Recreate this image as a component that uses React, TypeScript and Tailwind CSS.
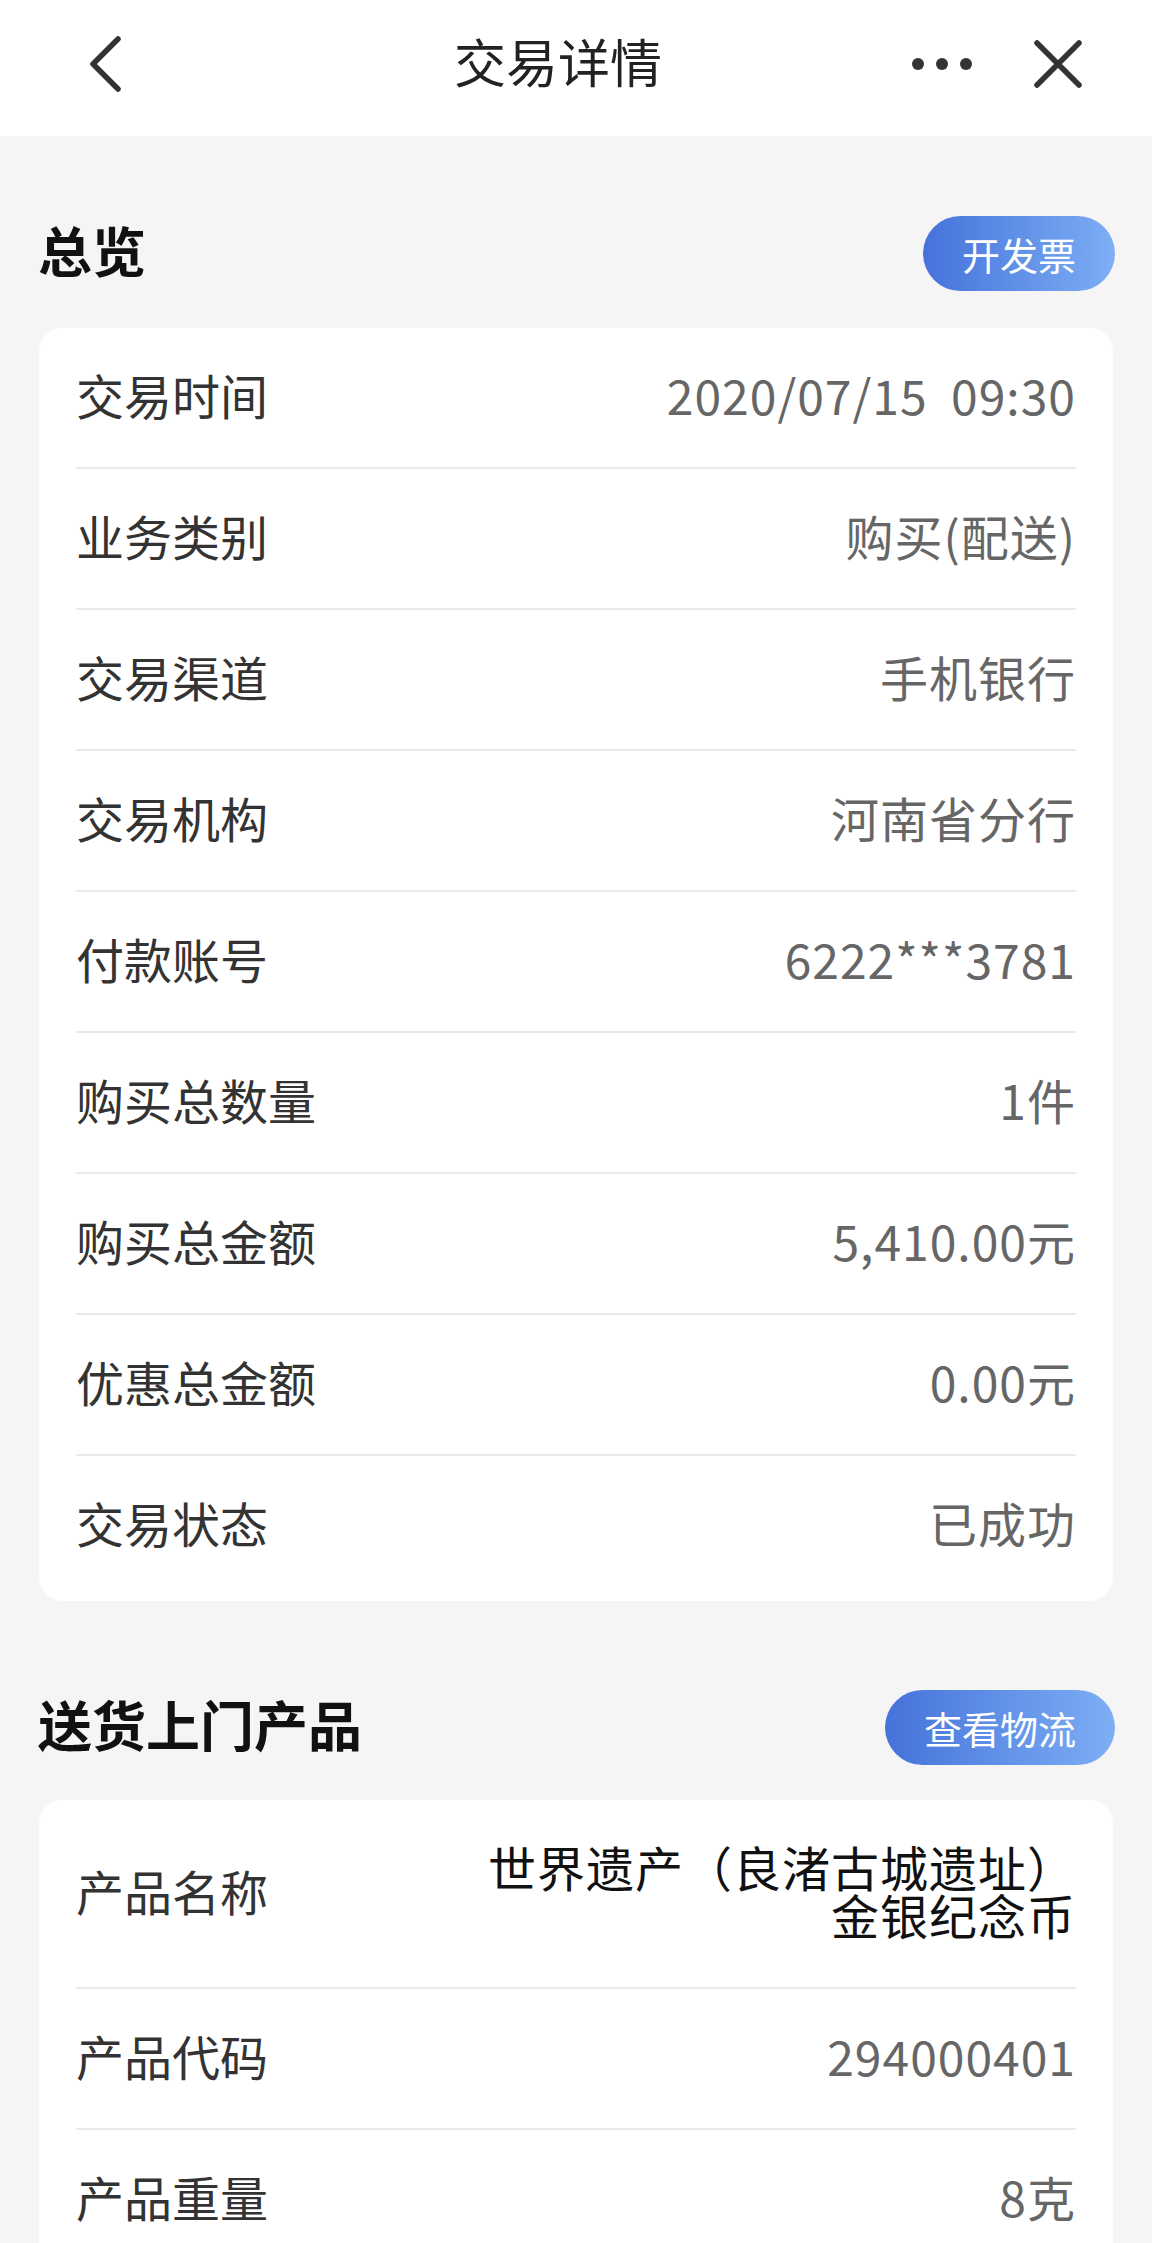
import React from "react";

const overview: [string, string][] = [
  ["交易时间", "2020/07/15  09:30"],
  ["业务类别", "购买(配送)"],
  ["交易渠道", "手机银行"],
  ["交易机构", "河南省分行"],
  ["付款账号", "6222***3781"],
  ["购买总数量", "1件"],
  ["购买总金额", "5,410.00元"],
  ["优惠总金额", "0.00元"],
  ["交易状态", "已成功"],
];

function SectionHead({ title, action, className = "" }: { title: string; action: string; className?: string }) {
  return (
    <div className={"flex items-center justify-between pl-[38px] pr-[37px] " + className}>
      <h2 className="pb-[8px] text-[54px] font-bold leading-none text-[#111]">{title}</h2>
      <button className="h-[75px] rounded-full bg-gradient-to-r from-[#4672da] to-[#7eaef4] px-[39px] text-[38px] leading-none text-white">
        {action}
      </button>
    </div>
  );
}

function Row({ label, children, last }: { label: string; children: React.ReactNode; last?: boolean }) {
  return (
    <div
      className={
        "flex items-center justify-between pt-[42px] " +
        (last ? "pb-[55px]" : "pb-[49px] border-b-[2px] border-[#e9e9e9]")
      }
    >
      <span className="text-[48px] leading-[48px] text-[#333]">{label}</span>
      {children}
    </div>
  );
}

export default function App() {
  return (
    <div
      className="h-[2243px] w-[1152px] overflow-hidden bg-[#f5f5f5]"
      style={{ fontFamily: '"Noto Sans CJK SC", "Noto Sans", sans-serif' }}
    >
      {/* top bar */}
      <header className="flex h-[136px] items-center bg-white pb-[8px]">
        <div className="w-[224px] pl-[88px]">
          <svg width="34" height="56" viewBox="0 0 34 56" className="block">
            <path d="M30 3 L5 28 L30 53" fill="none" stroke="#333" strokeWidth="5.5" strokeLinecap="round" strokeLinejoin="round" />
          </svg>
        </div>
        <h1 className="flex-1 pb-[6px] text-center text-[52px] leading-none text-[#222]">交易详情</h1>
        <div className="flex w-[260px] items-center pl-[20px]">
          <div className="flex gap-[12px]">
            <span className="h-[12px] w-[12px] rounded-full bg-[#333]" />
            <span className="h-[12px] w-[12px] rounded-full bg-[#333]" />
            <span className="h-[12px] w-[12px] rounded-full bg-[#333]" />
          </div>
          <svg width="50" height="50" viewBox="0 0 50 50" className="ml-[61px] block">
            <path d="M4 4 L46 46 M46 4 L4 46" fill="none" stroke="#333" strokeWidth="5.5" strokeLinecap="round" />
          </svg>
        </div>
      </header>

      <SectionHead title="总览" action="开发票" className="mt-[80px] mb-[37px]" />
      <div className="mx-[39px] rounded-[24px] bg-white px-[37px]">
        {overview.map(([k, v], i) => (
          <Row key={k} label={k} last={i === overview.length - 1}>
            <span className="whitespace-pre text-[48px] leading-[48px] tracking-[1px] text-[#666]">{v}</span>
          </Row>
        ))}
      </div>

      <SectionHead title="送货上门产品" action="查看物流" className="mt-[89px] mb-[35px]" />
      <div className="mx-[39px] rounded-[24px] bg-white px-[37px]">
        <Row label="产品名称">
          <div className="text-right text-[48px] leading-[48px] tracking-[1px] text-[#111]">
            <div>世界遗产（良渚古城遗址）</div>
            <div>金银纪念币</div>
          </div>
        </Row>
        <Row label="产品代码">
          <span className="text-[48px] leading-[48px] tracking-[1px] text-[#666]">294000401</span>
        </Row>
        <Row label="产品重量">
          <span className="text-[48px] leading-[48px] tracking-[1px] text-[#666]">8克</span>
        </Row>
        <Row label="产品规格" last>
          <span className="text-[48px] leading-[48px] tracking-[1px] text-[#666]">1枚</span>
        </Row>
      </div>
    </div>
  );
}
